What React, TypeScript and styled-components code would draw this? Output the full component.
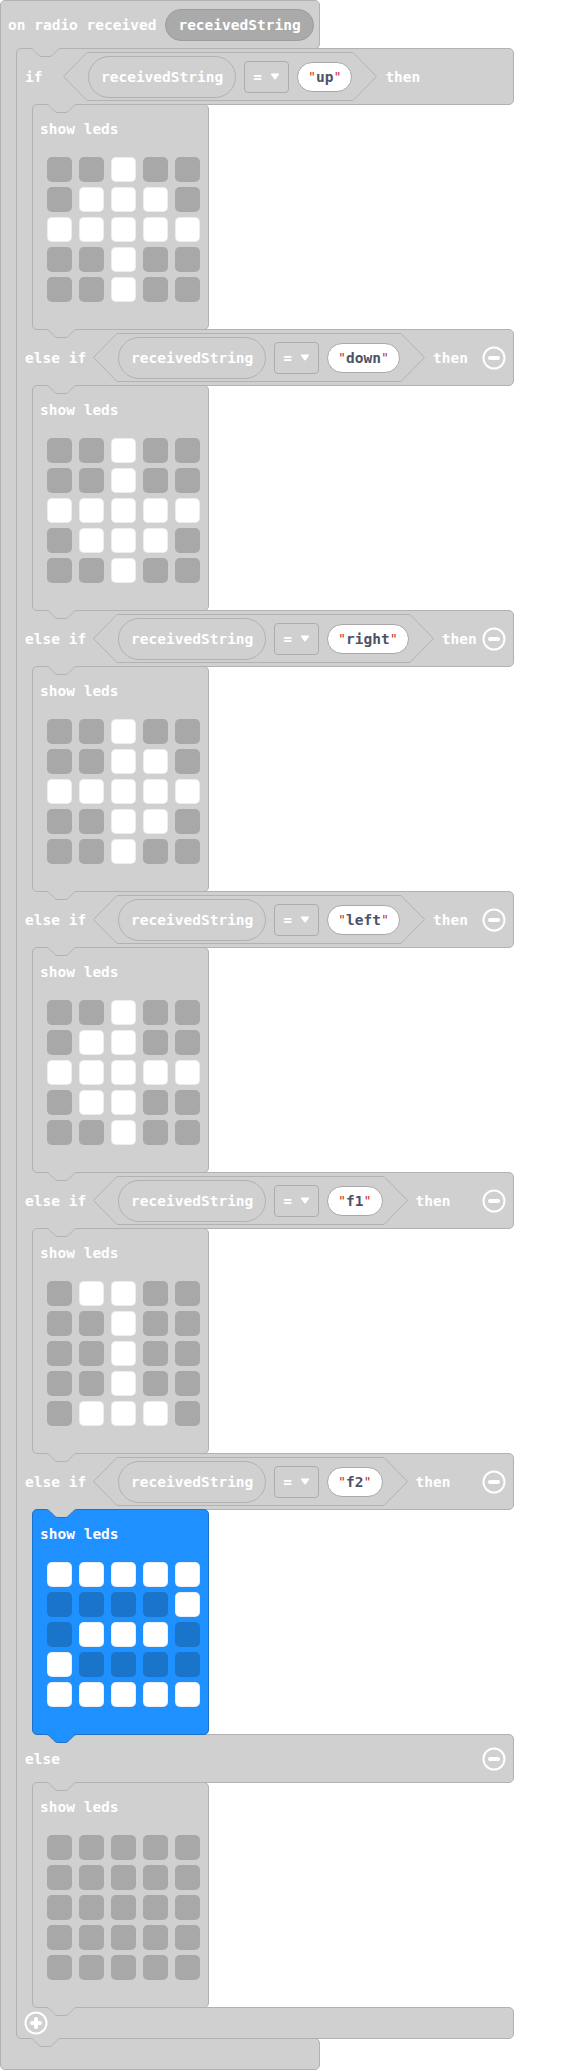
import React from "react";
import styled, { createGlobalStyle } from "styled-components";

const GRAY = "#d0d0d0";
const GRAY_EDGE = "#b2b2b2";
const LED_OFF = "#a8a8a8";
const BLUE = "#1e90ff";
const BLUE_EDGE = "#1b72c8";
const BLUE_LED_OFF = "#1a74ca";
const MONO = `"DejaVu Sans Mono", "Liberation Mono", monospace`;

const GlobalStyle = createGlobalStyle`
  html, body { margin: 0; padding: 0; background: #ffffff; }
  *, *::before, *::after { box-sizing: border-box; }
`;

const Workspace = styled.main`
  width: 567px;
  height: 2071px;
  overflow: hidden;
  font-family: ${MONO};
`;

/* ---------- event block (C shape) ---------- */
const EventBlock = styled.section`
  display: flex;
  flex-direction: column;
  width: 320px;
`;

const EventHeader = styled.header`
  display: flex;
  align-items: center;
  gap: 9px;
  height: 49px;
  padding: 0 7px;
  background: ${GRAY};
  border: 1px solid ${GRAY_EDGE};
  border-radius: 5px 5px 5px 0;
`;

const EventBody = styled.div`
  position: relative;
  z-index: 1;
  display: flex;
  margin: -1px 0;
  background: linear-gradient(90deg, ${GRAY} 0 24px, transparent 24px);
`;

const ArmColumn = styled.div`
  flex: none;
  width: 16px;
  background: ${GRAY};
  border-left: 1px solid ${GRAY_EDGE};
`;

const EventFooter = styled.footer`
  height: 32px;
  background: ${GRAY};
  border: 1px solid ${GRAY_EDGE};
  border-radius: 0 5px 5px 5px;
`;

/* ---------- if / else if block ---------- */
const IfBlock = styled.div`
  flex: none;
  display: flex;
  flex-direction: column;
  width: 498px;
`;

const BranchRow = styled.div<{ $h: number; $first?: boolean }>`
  position: relative;
  display: flex;
  align-items: center;
  height: ${(p) => p.$h}px;
  padding: 0 7px 0 8px;
  background: ${GRAY};
  border: 1px solid ${GRAY_EDGE};
  border-radius: ${(p) => (p.$first ? "5px 5px 5px 0" : "0 5px 5px 0")};
`;

const Arm = styled.div`
  position: relative;
  z-index: 1;
  display: flex;
  margin: -1px 0;
  background: linear-gradient(90deg, ${GRAY} 0 24px, transparent 24px);
`;

const BottomBar = styled.div`
  position: relative;
  display: flex;
  align-items: center;
  height: 32px;
  padding-left: 7px;
  background: ${GRAY};
  border: 1px solid ${GRAY_EDGE};
  border-radius: 0 5px 5px 5px;
`;

/* ---------- text & inputs ---------- */
const BlockText = styled.span<{ $ml?: number }>`
  flex: none;
  margin-left: ${(p) => p.$ml ?? 0}px;
  font-family: ${MONO};
  font-size: 14.5px;
  font-weight: 700;
  line-height: 20px;
  color: #ffffff;
  white-space: pre;
`;

const Hex = styled.div<{ $ml: number }>`
  flex: none;
  display: flex;
  height: 49px;
  margin-left: ${(p) => p.$ml}px;
`;

const HexCap = styled.svg`
  flex: none;
  display: block;
  width: 24px;
  height: 49px;
`;

const HexMiddle = styled.div`
  display: flex;
  align-items: center;
  gap: 8px;
  padding: 0 1px;
  border-top: 1px solid ${GRAY_EDGE};
  border-bottom: 1px solid ${GRAY_EDGE};
`;

const VarPill = styled.span<{ $dark?: boolean }>`
  flex: none;
  display: flex;
  align-items: center;
  height: ${(p) => (p.$dark ? 32 : 42)}px;
  padding: 0 12px;
  border-radius: 21px;
  background: ${(p) => (p.$dark ? "#aaaaaa" : GRAY)};
  border: 1px solid ${(p) => (p.$dark ? "#9d9d9d" : GRAY_EDGE)};
`;

const Dropdown = styled.span`
  flex: none;
  display: flex;
  align-items: center;
  gap: 8px;
  height: 32px;
  padding: 0 8px;
  border: 1px solid #adadad;
  border-radius: 4px;
`;

const Caret = styled.svg`
  display: block;
  width: 10px;
  height: 7px;
`;

const StringPill = styled.span`
  flex: none;
  display: flex;
  align-items: center;
  height: 30px;
  padding: 0 10px;
  background: #ffffff;
  border: 1px solid #a9a9a9;
  border-radius: 15px;
`;

const Quote = styled.span`
  width: 8px;
  text-align: center;
  font-family: "DejaVu Sans", sans-serif;
  font-size: 13px;
  line-height: 20px;
  color: #c0282d;
`;

const StringText = styled.span`
  font-family: ${MONO};
  font-size: 14.5px;
  font-weight: 700;
  line-height: 20px;
  color: #4d5268;
  white-space: pre;
`;

const RoundButton = styled.svg<{ $push?: boolean }>`
  flex: none;
  display: block;
  width: 24px;
  height: 24px;
  margin-left: ${(p) => (p.$push ? "auto" : "0")};
`;

/* ---------- show leds ---------- */
const ShowLedsBlock = styled.div<{ $blue?: boolean }>`
  position: relative;
  flex: none;
  display: flex;
  flex-direction: column;
  align-items: flex-start;
  width: 177px;
  height: 226px;
  padding: 14px 0 0 7px;
  background: ${(p) => (p.$blue ? BLUE : GRAY)};
  border: 1px solid ${(p) => (p.$blue ? BLUE_EDGE : GRAY_EDGE)};
  border-radius: 5px;
`;

const LedGrid = styled.div`
  display: grid;
  grid-template-columns: repeat(5, 25px);
  grid-auto-rows: 25px;
  column-gap: 7px;
  row-gap: 5px;
  margin: 18px 0 0 7px;
`;

const Led = styled.div<{ $on: boolean; $blue?: boolean }>`
  border-radius: 5px;
  background: ${(p) => (p.$on ? "#ffffff" : p.$blue ? BLUE_LED_OFF : LED_OFF)};
  box-shadow: ${(p) => (p.$on ? "inset 0 0 0 1px rgba(0,0,0,0.07)" : "none")};
`;

/* ---------- notch drawing ---------- */
const NOTCH_PATH =
  "c2,0 3,1 4,2 l4,4 c1,1 2,2 4,2 h7 c2,0 3,-1 4,-2 l4,-4 c1,-1 2,-2 4,-2";

const NotchShape = styled.svg<{ $at: "top" | "bottom" }>`
  position: absolute;
  left: 13px;
  top: ${(p) => (p.$at === "top" ? "-1px" : "100%")};
  width: 31px;
  height: 10px;
  overflow: visible;
  pointer-events: none;
`;

function Notch({ at, fill, edge }: { at: "top" | "bottom"; fill: string; edge: string }) {
  return (
    <NotchShape $at={at} viewBox="0 0 31 10" aria-hidden>
      <path d={`M0,0 V0.5 ${NOTCH_PATH} V0 Z`} fill={fill} />
      <path d={`M0,0.5 ${NOTCH_PATH}`} fill="none" stroke={edge} strokeWidth={1} />
    </NotchShape>
  );
}

function MinusButton() {
  return (
    <RoundButton $push viewBox="0 0 24 24" aria-label="remove">
      <circle cx="12" cy="12" r="10.5" fill="none" stroke="#fff" strokeWidth="2" />
      <rect x="6" y="10" width="12" height="4" rx="2" fill="#fff" />
    </RoundButton>
  );
}

function PlusButton() {
  return (
    <RoundButton viewBox="0 0 24 24" aria-label="add">
      <circle cx="12" cy="12" r="10.5" fill="none" stroke="#fff" strokeWidth="2" />
      <rect x="6" y="10" width="12" height="4" rx="2" fill="#fff" />
      <rect x="10" y="6" width="4" height="12" rx="2" fill="#fff" />
    </RoundButton>
  );
}

function Condition({ value, ml }: { value: string; ml: number }) {
  return (
    <Hex $ml={ml}>
      <HexCap viewBox="0 0 24 49">
        <polyline points="24,0.5 0.5,24.5 24,48.5" fill="none" stroke={GRAY_EDGE} strokeWidth="1" />
      </HexCap>
      <HexMiddle>
        <VarPill>
          <BlockText>receivedString</BlockText>
        </VarPill>
        <Dropdown>
          <BlockText>=</BlockText>
          <Caret viewBox="0 0 10 7">
            <path d="M1.5,1.2 L8.5,1.2 L5,5.8 Z" fill="#fff" stroke="#fff" strokeWidth="1.4" strokeLinejoin="round" />
          </Caret>
        </Dropdown>
        <StringPill>
          <Quote>"</Quote>
          <StringText>{value}</StringText>
          <Quote>"</Quote>
        </StringPill>
      </HexMiddle>
      <HexCap viewBox="0 0 24 49">
        <polyline points="0,0.5 23.5,24.5 0,48.5" fill="none" stroke={GRAY_EDGE} strokeWidth="1" />
      </HexCap>
    </Hex>
  );
}

function ShowLeds({ pattern, blue }: { pattern: string[]; blue?: boolean }) {
  return (
    <ShowLedsBlock $blue={blue}>
      <Notch at="top" fill={GRAY} edge={blue ? BLUE_EDGE : GRAY_EDGE} />
      <BlockText>show leds</BlockText>
      <LedGrid>
        {pattern.flatMap((row, r) =>
          row.split("").map((c, col) => <Led key={`${r}-${col}`} $on={c === "#"} $blue={blue} />)
        )}
      </LedGrid>
      <Notch at="bottom" fill={blue ? BLUE : GRAY} edge={blue ? BLUE_EDGE : GRAY_EDGE} />
    </ShowLedsBlock>
  );
}

type Branch = { kind: "if" | "elseif" | "else"; value?: string; leds: string[]; blue?: boolean };

const branches: Branch[] = [
  { kind: "if", value: "up", leds: ["..#..", ".###.", "#####", "..#..", "..#.."] },
  { kind: "elseif", value: "down", leds: ["..#..", "..#..", "#####", ".###.", "..#.."] },
  { kind: "elseif", value: "right", leds: ["..#..", "..##.", "#####", "..##.", "..#.."] },
  { kind: "elseif", value: "left", leds: ["..#..", ".##..", "#####", ".##..", "..#.."] },
  { kind: "elseif", value: "f1", leds: [".##..", "..#..", "..#..", "..#..", ".###."] },
  { kind: "elseif", value: "f2", leds: ["#####", "....#", ".###.", "#....", "#####"], blue: true },
  { kind: "else", leds: [".....", ".....", ".....", ".....", "....."] },
];

export default function App() {
  return (
    <>
      <GlobalStyle />
      <Workspace>
        <EventBlock>
          <EventHeader>
            <BlockText>on radio received</BlockText>
            <VarPill $dark>
              <BlockText>receivedString</BlockText>
            </VarPill>
          </EventHeader>
          <EventBody>
            <ArmColumn />
            <IfBlock>
              {branches.map((b, i) => (
                <React.Fragment key={i}>
                  <BranchRow $h={b.kind === "else" ? 49 : 57} $first={i === 0}>
                    {i === 0 && <Notch at="top" fill={GRAY} edge={GRAY_EDGE} />}
                    <BlockText>{b.kind === "if" ? "if" : b.kind === "elseif" ? "else if" : "else"}</BlockText>
                    {b.kind !== "else" && (
                      <>
                        <Condition value={b.value ?? ""} ml={b.kind === "if" ? 20.5 : 7} />
                        <BlockText $ml={8}>then</BlockText>
                      </>
                    )}
                    {i > 0 && <MinusButton />}
                  </BranchRow>
                  <Arm>
                    <ArmColumn />
                    <ShowLeds pattern={b.leds} blue={b.blue} />
                  </Arm>
                </React.Fragment>
              ))}
              <BottomBar>
                <PlusButton />
                <Notch at="bottom" fill={GRAY} edge={GRAY_EDGE} />
              </BottomBar>
            </IfBlock>
          </EventBody>
          <EventFooter />
        </EventBlock>
      </Workspace>
    </>
  );
}
